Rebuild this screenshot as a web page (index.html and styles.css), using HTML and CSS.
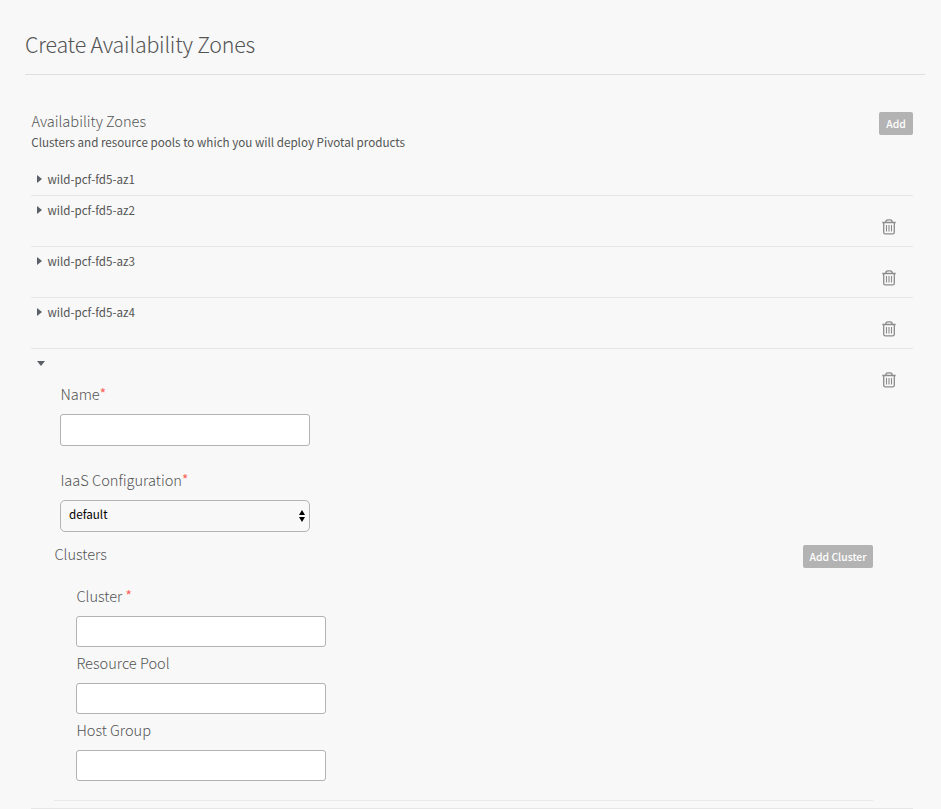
FILE: index.html
```html
<!DOCTYPE html>
<html lang="en">
<head>
<meta charset="utf-8">
<title>Create Availability Zones</title>
<link rel="stylesheet" href="styles.css">
</head>
<body>
<svg class="defs" width="0" height="0">
  <symbol id="trash" viewBox="0 0 14 16">
    <path d="M.3 3.500H13.700M3.700 3.200Q4 .9 5.800 .9H8.200Q10 .9 10.300 3.200M1.700 4V13.300Q1.700 14.900 3.200 14.900H10.800Q12.300 14.900 12.300 13.300V4" fill="none" stroke="#8c8c8c" stroke-width="1.300"/>
    <path d="M4.500 6V12.500M7 6V12.500M9.500 6V12.500" fill="none" stroke="#8c8c8c" stroke-width="1.100"/>
  </symbol>
</svg>
<main class="page">
  <h1 class="title"><span>Create Availability Zones</span></h1>
  <section class="zones">
    <header class="zones-head">
      <div class="zones-text">
        <h2 class="label">Availability Zones</h2>
        <p class="desc">Clusters and resource pools to which you will deploy Pivotal products</p>
      </div>
      <button class="btn btn-add">Add</button>
    </header>
    <div class="row row-first"><i class="caret"></i><span class="name">wild-pcf-fd5-az1</span></div>
    <div class="row"><i class="caret"></i><span class="name">wild-pcf-fd5-az2</span><svg class="trash"><use href="#trash"/></svg></div>
    <div class="row"><i class="caret"></i><span class="name">wild-pcf-fd5-az3</span><svg class="trash"><use href="#trash"/></svg></div>
    <div class="row"><i class="caret"></i><span class="name">wild-pcf-fd5-az4</span><svg class="trash"><use href="#trash"/></svg></div>
    <div class="row row-open">
      <i class="caret caret-down"></i>
      <div class="form">
        <div class="field field-name"><label class="label" for="name">Name<b>*</b></label><input id="name"></div>
        <div class="field field-iaas">
          <label class="label">IaaS Configuration<b>*</b></label>
          <div class="select"><span>default</span><svg width="6" height="12" viewBox="0 0 6 12"><path d="M0 5L3 0L6 5ZM0 7L3 12L6 7Z"/></svg></div>
        </div>
        <div class="clusters">
          <div class="clusters-head"><h3 class="label">Clusters</h3><button class="btn btn-cluster">Add Cluster</button></div>
          <div class="field"><label class="label" for="cluster">Cluster <b>*</b></label><input id="cluster"></div>
          <div class="field"><label class="label" for="pool">Resource Pool</label><input id="pool"></div>
          <div class="field"><label class="label" for="host">Host Group</label><input id="host"></div>
        </div>
      </div>
      <svg class="trash"><use href="#trash"/></svg>
    </div>
  </section>
</main>
</body>
</html>
```
FILE: styles.css
```css
* { box-sizing: border-box; }
body { margin: 0; background: #f8f8f8; color: #535454; font: 12.5px/20px "Noto Sans CJK SC", "Open Sans", sans-serif; overflow: hidden; }
h1, h2, h3, p { margin: 0; }
.defs { display: block; }
.page { height: 809px; padding: 0 16px 0 25px; }
.title { height: 75px; padding-top: 29px; border-bottom: 1px solid #dfdfdf; font-size: 21.4px; line-height: 30px; font-weight: 300; letter-spacing: -0.2px; }
.zones { margin: 37px 12px 0 6px; }
.zones-head { display: flex; justify-content: space-between; align-items: flex-start; height: 57px; }
.zones-text { margin-top: -1px; }
.label { display: block; padding-left: 0.4px; font-size: 14.6px; line-height: 20px; font-weight: 300; }
.label b { color: #ff5a50; font-weight: 400; font-size: 13.5px; line-height: 1; vertical-align: 1px; }
.desc { padding-left: 0.3px; line-height: 22px; font-size: 11.65px; }
.btn { height: 23px; padding: 0; border: 0; border-radius: 2px; background: #b3b3b3; color: #fff; font: 500 10.4px/23px "Noto Sans CJK SC", sans-serif; }
.btn-add { width: 34px; }
.btn-cluster { width: 70px; }
.row { display: flex; align-items: flex-start; height: 51px; border-bottom: 1px solid #e6e6e6; padding: 4px 17px 0 6px; }
.row-first { height: 27px; padding-top: 0; }
.caret { width: 0; height: 0; margin: 6px 0 0 0.4px; border-left: 5px solid #5b6068; border-top: 4px solid transparent; border-bottom: 4px solid transparent; }
.caret-down { margin: 9px 0 0 0.4px; border-top: 5px solid #5b6068; border-left: 4px solid transparent; border-right: 4px solid transparent; border-bottom: 0; }
.name { margin-left: 5.1px; font-size: 11.6px; }
.trash { width: 14px; height: 16px; margin: 19px 0 0 auto; }
.row-open { height: 460px; padding-top: 3px; }
.row-open .trash { margin-top: 20px; }
.form { width: 819px; margin: 32px -8px 0 8.6px; flex: none; }
.field input { display: block; width: 250px; height: 31px; border: 1px solid #b3b3b3; border-radius: 3px; background: #fff; }
.field-name, .field-iaas { margin-left: 6px; height: 86px; }
.field-name input { margin-top: 10px; height: 32px; }
.field-iaas { height: 74px; }
.select { display: flex; align-items: center; justify-content: space-between; width: 250px; height: 32px; margin-top: 10px; padding: 0 4px 0 8px; border: 1px solid #b3b3b3; border-radius: 5px; color: #000; font-size: 11.66px; }
.select span { margin-top: -5px; }
.clusters { height: 257px; border-bottom: 1px solid #e9e9e9; }
.clusters-head { display: flex; justify-content: space-between; height: 42px; }
.clusters-head .btn { margin-top: 1px; }
.clusters .field { height: 67px; margin-left: 22px; }
.clusters input { margin-top: 10px; }
```
